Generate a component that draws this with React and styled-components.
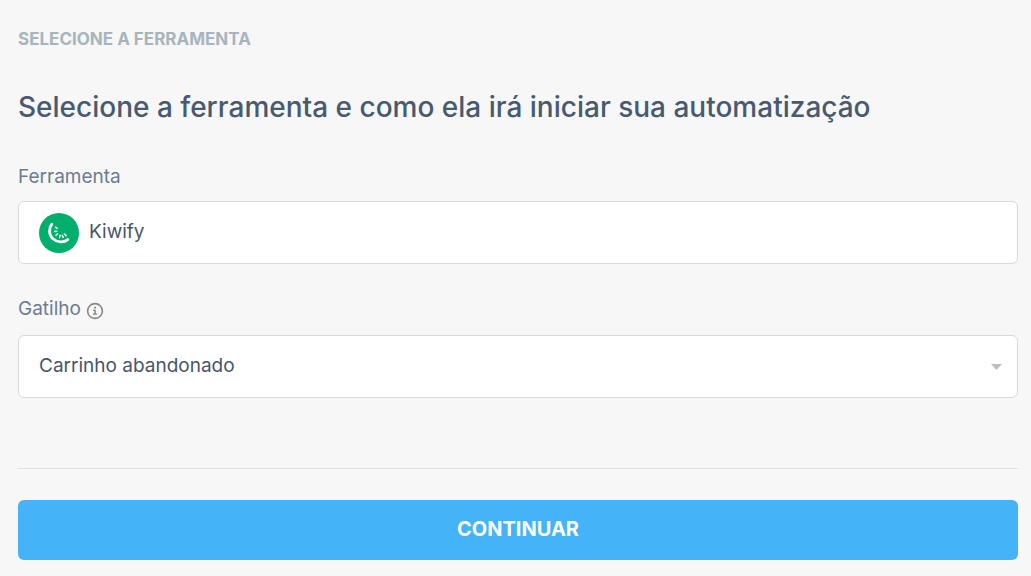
import React from 'react';
import styled, { createGlobalStyle } from 'styled-components';

const GlobalStyle = createGlobalStyle`
    * {
        box-sizing: border-box;
    }
    body {
        margin: 0;
        background: #f7f7f7;
        color: #475569;
        font-family: 'Proxima Nova', Inter, 'Open Sans', sans-serif;
    }
`;

const Form = styled.form`
    display: flex;
    flex-direction: column;
    padding: 27px 13px 16px 18px;
`;

const Step = styled.h2`
    margin: 0;
    color: #a6b5bd;
    font-size: 17px;
    font-weight: 700;
    line-height: 24px;
    text-transform: uppercase;
`;

const Title = styled.h1`
    margin: 38px 0 0;
    color: #475a70;
    font-size: 28px;
    font-weight: 500;
    line-height: 36px;
`;

const Field = styled.div`
    display: flex;
    flex-direction: column;
    gap: ${props => props.$gap};
    margin-top: ${props => props.$top};
`;

const LabelRow = styled.div`
    display: flex;
    align-items: center;
    gap: 5px;
    height: 24px;
`;

const Label = styled.label`
    color: #6b7c8f;
    font-size: 19px;
    line-height: 24px;
`;

const InfoButton = styled.button`
    display: flex;
    margin: 4px 0 0;
    padding: 0;
    border: 0;
    background: none;
    color: #878787;
`;

const Box = styled.div`
    display: flex;
    align-items: center;
    gap: 10px;
    height: 63px;
    padding: 0 14px 0 20px;
    border: 1px solid #d9d9d9;
    border-radius: 6px;
    background: #fff;
`;

const Input = styled.input`
    flex: 1;
    min-width: 0;
    height: 100%;
    padding: 0 0 2px;
    border: 0;
    outline: 0;
    background: none;
    color: #475569;
    font: inherit;
    font-size: 19px;
`;

const Select = styled.select`
    flex: 1;
    min-width: 0;
    height: 100%;
    padding: 0 0 2px;
    border: 0;
    outline: 0;
    appearance: none;
    background: none;
    color: #475569;
    font: inherit;
    font-size: 19px;
`;

const Divider = styled.hr`
    width: 100%;
    margin: 70px 0 31px;
    border: 0;
    border-top: 1px solid #e0e0e0;
`;

const Submit = styled.button`
    height: 60px;
    padding: 0 0 2px;
    border: 0;
    border-radius: 6px;
    background: #44b3f7;
    color: #fff;
    font: inherit;
    font-size: 20px;
    font-weight: 700;
    text-transform: uppercase;
`;

const KiwifyLogo = () => (
    <svg width="40" height="40" viewBox="0 0 40 40" aria-hidden="true">
        <circle cx="20" cy="20" r="20" fill="#00af6b" />
        <g fill="none" stroke="#fff" strokeLinecap="round">
            <path d="M12.8 11.2C9.4 15.6 9.8 22 13.9 25.8C18 29.4 24.4 30 28.8 26.6" strokeWidth="2.8" />
            <path
                d="M16.6 14.2l1.6 1.2M15.6 18.4l2.2-.1M17 22.2l1.6-1.4M20.6 24.4l.4-2M24.2 24.4l-1-2M27 22.6l-1.6-1.6"
                strokeWidth="1.5"
            />
        </g>
    </svg>
);

const InfoIcon = () => (
    <svg width="18" height="18" viewBox="0 0 18 18" aria-hidden="true">
        <circle cx="9" cy="9" r="7.4" fill="none" stroke="currentColor" strokeWidth="1.6" />
        <path d="M8.2 4.8h1.8v1.7H8.2zM7 7.8h2.8v3.8H11v1.2H7v-1.2h1.3V9H7z" fill="currentColor" />
    </svg>
);

const Caret = () => (
    <svg width="12" height="8" viewBox="0 0 12 8" aria-hidden="true">
        <path d="M0 1h11L5.5 7z" fill="#bdbdbd" />
    </svg>
);

export default class App extends React.Component {
    constructor(props) {
        super(props);

        this.handleTrigger = this.handleTrigger.bind(this);
        this.handleSubmit = this.handleSubmit.bind(this);
    }
    state = {
        tool: 'Kiwify',
        trigger: 'Carrinho abandonado'
    };
    handleTrigger(event) {
        this.setState({ trigger: event.target.value });
    }
    handleSubmit(event) {
        event.preventDefault();
    }
    render() {
        return (
            <>
                <GlobalStyle />
                <Form onSubmit={this.handleSubmit}>
                    <Step>Selecione a ferramenta</Step>
                    <Title>Selecione a ferramenta e como ela irá iniciar sua automatização</Title>
                    <Field $top="40px" $gap="12px">
                        <LabelRow>
                            <Label htmlFor="tool">Ferramenta</Label>
                        </LabelRow>
                        <Box>
                            <KiwifyLogo />
                            <Input id="tool" type="text" value={this.state.tool} readOnly />
                        </Box>
                    </Field>
                    <Field $top="33px" $gap="14px">
                        <LabelRow>
                            <Label htmlFor="trigger">Gatilho</Label>
                            <InfoButton type="button" aria-label="Sobre o gatilho">
                                <InfoIcon />
                            </InfoButton>
                        </LabelRow>
                        <Box>
                            <Select id="trigger" value={this.state.trigger} onChange={this.handleTrigger}>
                                <option>Carrinho abandonado</option>
                            </Select>
                            <Caret />
                        </Box>
                    </Field>
                    <Divider />
                    <Submit type="submit">Continuar</Submit>
                </Form>
            </>
        );
    }
}
